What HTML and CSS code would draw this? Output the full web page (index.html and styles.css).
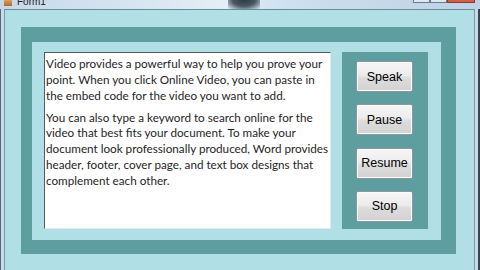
FILE: index.html
```html
<!DOCTYPE html>
<html>
<head>
<meta charset="utf-8">
<link rel="stylesheet" href="styles.css">
</head>
<body>
<div class="window">
  <div class="titlebar">
    <div class="title">
      <span class="appicon"></span>
      <span class="title-text">Form1</span>
    </div>
    <div class="blob"></div>
    <div class="caption-btns">
      <span class="cb"></span><span class="cb"></span><span class="cb close"></span>
    </div>
  </div>
  <div class="frame">
    <div class="client">
      <div class="outer">
        <div class="inner">
          <div class="textbox">
            <p>Video provides a powerful way to help you prove your<br>point. When you click Online Video, you can paste in<br>the embed code for the video you want to add.</p>
            <p>You can also type a keyword to search online for the<br>video that best fits your document. To make your<br>document look professionally produced, Word provides<br>header, footer, cover page, and text box designs that<br>complement each other.</p>
          </div>
          <div class="buttons">
            <button class="btn">Speak</button>
            <button class="btn">Pause</button>
            <button class="btn">Resume</button>
            <button class="btn">Stop</button>
          </div>
        </div>
      </div>
    </div>
  </div>
</div>
</body>
</html>
```
FILE: styles.css
```css
html, body {
  margin: 0;
  padding: 0;
}
body {
  width: 480px;
  height: 270px;
  overflow: hidden;
}
.window {
  width: 480px;
  height: 270px;
  display: flex;
  flex-direction: column;
  background: linear-gradient(to right, #5a6a7a 0, #5a6a7a 1px, #c9dbe9 1px, #c9dbe9 478px, #3a4450 478px);
}
.titlebar {
  height: 9px;
  position: relative;
  background: linear-gradient(to right, #c6d8e8 0%, #d8e6f2 30%, #e4eef6 47%, #cfe0ee 60%, #bcd2e6 100%);
  display: flex;
  align-items: flex-end;
  justify-content: space-between;
  overflow: hidden;
}
.title {
  display: flex;
  align-items: center;
  gap: 5px;
  margin-left: 4px;
  height: 9px;
  position: relative;
  top: -3px;
}
.appicon {
  width: 8px;
  height: 8px;
  background: linear-gradient(#e8b070, #b06a30);
}
.title-text {
  font-family: "Liberation Sans", sans-serif;
  font-size: 10px;
  color: #222;
}
.blob {
  position: absolute;
  left: 228px;
  top: 0;
  width: 32px;
  height: 9px;
  background: radial-gradient(ellipse at center 0, #2f3a44 0, #4a5865 50%, rgba(90,110,130,0) 100%);
}
.caption-btns {
  display: flex;
  align-self: flex-start;
  margin-right: 5px;
  height: 3px;
}
.cb {
  width: 15px;
  height: 2px;
  border: 1px solid #6b7b8c;
  border-top: none;
  background: #dfe7ef;
}
.cb.close {
  width: 26px;
  background: #d0604c;
  border-color: #8a3a30;
}
.frame {
  flex: 1;
  padding: 0 5px 0 4px;
  display: flex;
}
.client {
  flex: 1;
  background: #b0e0e6;
  border-top: 1px solid #6e8a95;
  border-left: 1px solid #7d9aa4;
  border-right: 1px solid #7d9aa4;
  padding: 17px 0 0 16px;
}
.outer {
  width: 435px;
  height: 227px;
  box-sizing: border-box;
  background: #5f9ea0;
  padding: 15px 15px 14px 11px;
}
.inner {
  height: 100%;
  background: #b0e0e6;
  box-sizing: border-box;
  padding: 10px 13px 0 12px;
  display: flex;
  gap: 11px;
}
.textbox {
  width: 287px;
  height: 177px;
  box-sizing: border-box;
  background: #fff;
  border-top: 1px solid #5a5a5a;
  border-left: 1px solid #5a5a5a;
  border-right: 1px solid #e8e8e8;
  border-bottom: 1px solid #e8e8e8;
  padding: 3px 2px 0 1px;
  font-family: Lato, sans-serif;
  font-size: 11.7px;
  line-height: 15.8px;
  color: #1e1e1e;
  white-space: nowrap;
  overflow: hidden;
}
.textbox p {
  margin: 0 0 6.3px 0;
}
.buttons {
  width: 86px;
  height: 177px;
  box-sizing: border-box;
  background: #5f9ea0;
  padding: 9px 15px 0 14px;
  display: flex;
  flex-direction: column;
  gap: 12.3px;
}
.btn {
  width: 57px;
  height: 31px;
  margin: 0;
  padding: 0;
  border: 1px solid #8a9a9c;
  border-radius: 2px;
  background: linear-gradient(#f6f6f6 0%, #ececec 45%, #dcdcdc 55%, #d2d2d2 100%);
  font-family: "Liberation Sans", Arial, sans-serif;
  font-size: 12.5px;
  color: #000;
  box-shadow: inset 0 0 0 1px #fbfbfb;
}
```
